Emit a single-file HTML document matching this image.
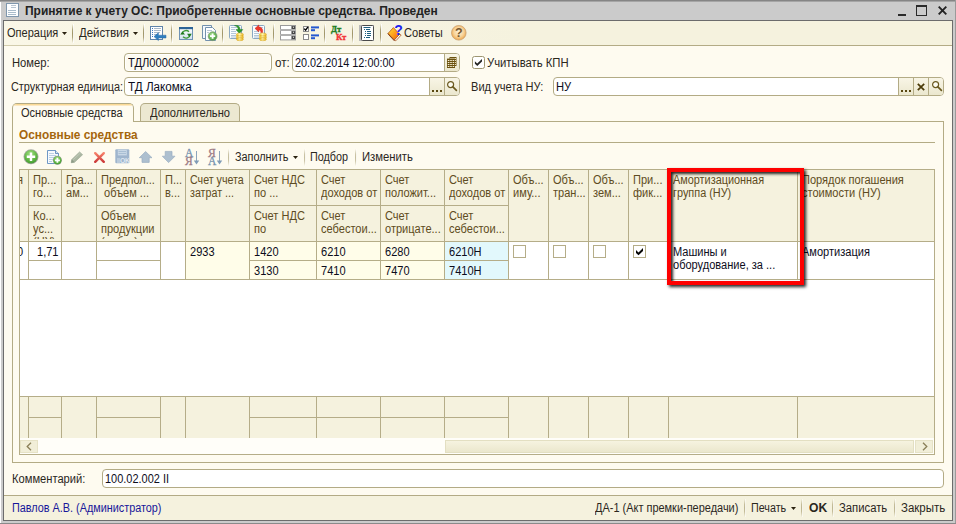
<!DOCTYPE html>
<html lang="ru"><head><meta charset="utf-8"><title>Принятие к учету ОС</title>
<style>
*{box-sizing:border-box;margin:0;padding:0}
html,body{width:956px;height:524px;overflow:hidden;background:#c9c9c9}
body{position:relative;font-family:"Liberation Sans",Arial,sans-serif;font-size:11px;line-height:13px;color:#2b271d}
.a{position:absolute}
.t{position:absolute;white-space:nowrap;line-height:13px;font-size:12px;transform-origin:0 0}
.k{transform:scaleX(0.92)}
.d{color:#0d0d1c}
.h{color:#5e4c22}
.sep{position:absolute;width:2px;background:linear-gradient(to right,transparent 0,transparent 50%,rgba(255,255,255,.9) 50%),linear-gradient(rgba(168,158,114,0),rgba(168,158,114,.95) 30%,rgba(160,150,104,1) 50%,rgba(168,158,114,.95) 70%,rgba(168,158,114,0))}
.inp{position:absolute;border:1px solid #b3ab85;border-radius:4px;background:#fff}
.btn{position:absolute;background:linear-gradient(#f8f5e6,#ebe7ce);border-left:1px solid #b3ab85}
.vl{position:absolute;width:1px;background:#b5ad88}
.hl{position:absolute;height:1px;background:#b5ad88}
.cb{position:absolute;width:13px;height:13px;border:1px solid #b5ad88;background:#fff}
svg{position:absolute;overflow:visible}
</style></head>
<body>
<div class="a" style="left:0;top:0;width:956px;height:524px;background:#cbcbcb"></div>
<div class="a" style="left:0;top:0;width:956px;height:1px;background:#858585"></div>
<div class="a" style="left:0;top:1px;width:956px;height:1px;background:#a5a5a5"></div>
<div class="a" style="left:0;top:2px;width:1px;height:522px;background:#fff"></div>
<div class="a" style="left:955px;top:0;width:1px;height:524px;background:#9a9a9a"></div>
<div class="a" style="left:0;top:523px;width:956px;height:1px;background:#8a8a8a"></div>
<div class="a" style="left:3px;top:20px;width:950px;height:501px;background:#fefbf0;border:1px solid #6c6c6c"></div>
<svg style="left:6px;top:3px" width="13" height="14" viewBox="0 0 13 14">
<rect x="0.5" y="0.5" width="12" height="13" fill="#fdfeff" stroke="#7f97ad"/>
<rect x="1" y="1" width="11" height="12" fill="none" stroke="#dfe8f0" stroke-width="0"/>
<line x1="5" y1="2.5" x2="10" y2="2.5" stroke="#b9c6d2"/>
<line x1="5" y1="4.5" x2="10" y2="4.5" stroke="#b9c6d2"/>
<line x1="2" y1="7.5" x2="10" y2="7.5" stroke="#a9bccb"/>
<line x1="2" y1="9.5" x2="10" y2="9.5" stroke="#a9bccb"/>
<line x1="2" y1="11.5" x2="10" y2="11.5" stroke="#a9bccb"/>
</svg>
<div class="t" style="left:25.0px;top:5px;transform:scaleX(0.996);font-weight:bold;color:#222;">Принятие к учету ОС: Приобретенные основные средства. Проведен</div>
<div class="a" style="left:898px;top:14px;width:8px;height:2px;background:#2a2a2a"></div>
<div class="a" style="left:916px;top:5px;width:11px;height:11px;border:1px solid #2a2a2a;border-top-width:2px"></div>
<svg style="left:938px;top:6px" width="9" height="9" viewBox="0 0 9 9"><path d="M0.7 0.7 L8.3 8.3 M8.3 0.7 L0.7 8.3" stroke="#222" stroke-width="1.9" fill="none"/></svg>
<div class="a" style="left:4px;top:21px;width:948px;height:24px;background:linear-gradient(to right,#faf7e7 0,#f5f2de 55%,#f5f2de 100%)"></div>
<div class="a" style="left:4px;top:45px;width:948px;height:1px;background:linear-gradient(to right,#d3cdae 0,#b3ab85 45%)"></div>
<div class="t" style="left:7.1px;top:27px;transform:scaleX(0.917);">Операция</div>
<svg style="left:62px;top:32px" width="5" height="3" viewBox="0 0 5 3"><path d="M0 0h5L2.5 3z" fill="#2a2210"/></svg>
<div class="sep" style="left:72px;top:24px;height:19px"></div>
<div class="t" style="left:79.0px;top:27px;transform:scaleX(0.948);">Действия</div>
<svg style="left:133px;top:32px" width="5" height="3" viewBox="0 0 5 3"><path d="M0 0h5L2.5 3z" fill="#2a2210"/></svg>
<div class="sep" style="left:143px;top:24px;height:19px"></div>
<div class="sep" style="left:171px;top:24px;height:19px"></div>
<div class="sep" style="left:222px;top:24px;height:19px"></div>
<div class="sep" style="left:273px;top:24px;height:19px"></div>
<div class="sep" style="left:324px;top:24px;height:19px"></div>
<div class="sep" style="left:352px;top:24px;height:19px"></div>
<div class="sep" style="left:380px;top:24px;height:19px"></div>
<div class="t" style="left:404.1px;top:27px;transform:scaleX(0.925);">Советы</div>
<!-- icon1: list with blue arrow -->
<svg style="left:150px;top:26px" width="17" height="16" viewBox="0 0 17 16">
<rect x="0.5" y="0.5" width="12" height="13" fill="#fdfeff" stroke="#5f84aa"/>
<path d="M2 2.5h1M2 4.5h1M2 6.5h1M2 8.5h1M2 10.5h1" stroke="#3a78c0"/>
<path d="M4 2.5h7M4 4.5h7M4 6.5h6M4 8.5h3" stroke="#a9b8c6"/>
<path d="M4 10.6 L8.4 6.8 V9.2 H16 V12 H8.4 V14.6 Z" fill="#2f7fc0" stroke="#2a6aa6" stroke-width="0.5"/>
</svg>
<!-- icon2: refresh window -->
<svg style="left:179px;top:27px" width="14" height="13" viewBox="0 0 14 13">
<defs><linearGradient id="g2" x1="0" y1="0" x2="0" y2="1"><stop offset="0" stop-color="#fff"/><stop offset="1" stop-color="#cfe0ee"/></linearGradient></defs>
<rect x="0.5" y="0.5" width="13" height="12" fill="url(#g2)" stroke="#6f93b6"/>
<rect x="0" y="0" width="14" height="2.2" fill="#2d6497"/>
<path d="M3 7.2 A4 3.6 0 0 1 10 4.8" stroke="#3f9a3a" stroke-width="1.3" fill="none"/>
<path d="M11 7.4 A4 3.6 0 0 1 4 9.8" stroke="#3f9a3a" stroke-width="1.3" fill="none"/>
<path d="M1.2 7.6 L6 7.6 L3.6 4.4 Z" fill="#1f7a1f"/>
<path d="M8 6.8 L12.8 6.8 L10.4 10 Z" fill="#1f7a1f"/>
</svg>
<!-- icon3: docs with plus -->
<svg style="left:202px;top:25px" width="16" height="16" viewBox="0 0 16 16">
<defs><radialGradient id="g3" cx="0.4" cy="0.35" r="0.7"><stop offset="0" stop-color="#a6e08a"/><stop offset="1" stop-color="#3f9a35"/></radialGradient></defs>
<path d="M0.5 0.5 H9.5 V13.5 H0.5 Z" fill="#f4f8fb" stroke="#7391ae"/>
<path d="M3.5 2.5 H10.5 L13.5 5.5 V15.5 H3.5 Z" fill="#fdfeff" stroke="#7391ae"/>
<path d="M5 5.5h5M5 7.5h2" stroke="#b9c7d4"/>
<circle cx="10.6" cy="11.2" r="4.4" fill="url(#g3)" stroke="#7f9a7a" stroke-width="0.8"/>
<path d="M10.6 8.6 V13.8 M8 11.2 H13.2" stroke="#fff" stroke-width="1.8"/>
</svg>
<!-- icon4: doc + green arrow + coins -->
<svg style="left:229px;top:25px" width="16" height="16" viewBox="0 0 16 16">
<defs><linearGradient id="gc" x1="0" y1="0" x2="1" y2="0"><stop offset="0" stop-color="#f2bc1c"/><stop offset="0.45" stop-color="#fff7b0"/><stop offset="1" stop-color="#eeb418"/></linearGradient></defs>
<rect x="0.5" y="0.5" width="12" height="13" rx="1" fill="#fafcfe" stroke="#7d9dbc" stroke-width="0.9"/>
<path d="M2 2.5h6M2 4.5h4M2 6.5h5M2 8.5h5M2 10.5h5M2 12h5" stroke="#b3c6d8"/>
<path d="M5.5 0.6 C9.5 -0.2 11.2 2 11 4.6 H13.8 L10.4 8.4 L7 4.6 H9.2 C9.2 2.6 8 1.2 5.5 0.6 Z" fill="#2f9a2a" stroke="#1f7a1f" stroke-width="0.5"/>
<g stroke="#cf9a12" stroke-width="0.45" fill="url(#gc)">
<ellipse cx="10.9" cy="14.2" rx="3.5" ry="1.5"/><ellipse cx="10.9" cy="12.6" rx="3.5" ry="1.5"/><ellipse cx="10.9" cy="11" rx="3.5" ry="1.5"/><ellipse cx="10.9" cy="9.4" rx="3.5" ry="1.5"/>
</g>
</svg>
<!-- icon5: doc + red arrow + coins -->
<svg style="left:252px;top:25px" width="16" height="16" viewBox="0 0 16 16">
<rect x="0.5" y="0.5" width="12" height="13" rx="1" fill="#fafcfe" stroke="#7d9dbc" stroke-width="0.9"/>
<path d="M2 6.5h5M2 8.5h5M2 10.5h5M2 12h5M9 2.5h2" stroke="#b3c6d8"/>
<path d="M3 3.4 L6.8 0 V2 C9.6 2 11.2 4 10.6 7.6 H8.8 C9 5.8 8.4 4.9 6.8 4.9 V6.9 Z" fill="#f0382a" stroke="#c8221a" stroke-width="0.5"/>
<g stroke="#cf9a12" stroke-width="0.45" fill="url(#gc)">
<ellipse cx="10.9" cy="14.2" rx="3.5" ry="1.5"/><ellipse cx="10.9" cy="12.6" rx="3.5" ry="1.5"/><ellipse cx="10.9" cy="11" rx="3.5" ry="1.5"/><ellipse cx="10.9" cy="9.4" rx="3.5" ry="1.5"/>
</g>
</svg>
<!-- icon6: three dropdown rows -->
<svg style="left:280px;top:25px" width="16" height="16" viewBox="0 0 16 16">
<g>
<rect x="0" y="0" width="16" height="5" fill="#9a9a9a"/><rect x="1" y="1" width="10" height="3" fill="#fff"/><rect x="12" y="1" width="3" height="3" fill="#454545"/>
<rect x="0" y="5" width="16" height="5" fill="#9a9a9a"/><rect x="1" y="6" width="10" height="3" fill="#fff"/><rect x="12" y="6" width="3" height="3" fill="#454545"/>
<rect x="0" y="10" width="16" height="5.4" fill="#9a9a9a"/><rect x="1" y="11" width="10" height="3.4" fill="#fff"/><rect x="12" y="11" width="3" height="3" fill="#454545"/>
<path d="M0 5h16M0 10h16" stroke="#d0d0d0" stroke-width="0.8"/><path d="M12.6 1.8h1.8l-0.9 1.2zM12.6 6.8h1.8l-0.9 1.2zM12.6 11.8h1.8l-0.9 1.2z" fill="#fff"/>
</g>
</svg>
<!-- icon7: checkboxes with blue lines -->
<svg style="left:303px;top:26px" width="16" height="14" viewBox="0 0 16 14">
<rect x="0.5" y="0.5" width="5" height="5" fill="#fff" stroke="#8a8a8a"/>
<path d="M1.2 2.6 L2.6 4.2 L5 0.8" stroke="#000" stroke-width="1.4" fill="none"/>
<rect x="0.5" y="8.5" width="5" height="5" fill="#fff" stroke="#8a8a8a"/>
<rect x="8" y="0.4" width="8" height="2" fill="#2458d0"/><rect x="8" y="3.2" width="4" height="2" fill="#2458d0"/>
<rect x="8" y="8.4" width="8" height="2" fill="#2458d0"/><rect x="8" y="11.2" width="4" height="2" fill="#2458d0"/>
</svg>
<!-- icon8: ДтКт -->
<div class="a" style="left:331px;top:24px;font-family:'Liberation Serif',serif;font-weight:bold;font-size:8.7px;line-height:10px;color:#1c7c1c;white-space:nowrap;letter-spacing:0;-webkit-text-stroke:0.35px #1c7c1c">Дт</div>
<div class="a" style="left:336px;top:32px;font-family:'Liberation Serif',serif;font-weight:bold;font-size:8.7px;line-height:10px;color:#f23434;white-space:nowrap;letter-spacing:0;-webkit-text-stroke:0.35px #f23434">Кт</div>
<!-- icon9: framed document -->
<svg style="left:359px;top:25px" width="15" height="16" viewBox="0 0 15 16">
<rect x="0" y="0" width="15" height="16" fill="#b9b9b9"/>
<rect x="2.5" y="0.5" width="12" height="15" rx="1" fill="#fff" stroke="#4a4a4a"/>
<path d="M4.5 2.5h7" stroke="#1d5f80"/>
<path d="M5 4.5h1M7 4.5h4M6 6.5h1M8 6.5h4M6 8.5h1M8 8.5h4M6 10.5h1M8 10.5h4M5 12.5h1M7 12.5h4" stroke="#1d5f80"/>
</svg>
<!-- icon10: book with ? -->
<svg style="left:387px;top:24px" width="17" height="18" viewBox="0 0 17 18">
<defs><linearGradient id="gb" x1="0" y1="0" x2="1" y2="1"><stop offset="0" stop-color="#ffe23a"/><stop offset="0.55" stop-color="#ff9a1a"/><stop offset="1" stop-color="#e2520a"/></linearGradient></defs>
<path d="M1 9.4 L6.4 3.6 L12.6 10.2 L7.4 16 Z" fill="url(#gb)" stroke="#a8480a" stroke-width="0.7"/>
<path d="M7.4 16 L8.8 16.8 L14.2 11 L12.6 10.2 Z" fill="#fff" stroke="#a8480a" stroke-width="0.7"/>
<path d="M1 9.4 L2 11 L7.6 17" stroke="#7a2a04" stroke-width="0.9" fill="none"/>
<text x="7.2" y="11" font-family="Liberation Sans, Arial, sans-serif" font-weight="bold" font-size="14" fill="#1a22f0">?</text>
</svg>
<!-- help -->
<svg style="left:451px;top:25px" width="16" height="16" viewBox="0 0 16 16">
<defs><radialGradient id="gh" cx="0.5" cy="0.45" r="0.55"><stop offset="0" stop-color="#fdf0d6"/><stop offset="0.6" stop-color="#f8d49a"/><stop offset="1" stop-color="#eea64a"/></radialGradient></defs>
<circle cx="7.8" cy="7.8" r="7.3" fill="url(#gh)" stroke="#c9a070" stroke-width="0.8"/>
<text x="7.9" y="12.4" text-anchor="middle" font-family="Liberation Sans, Arial, sans-serif" font-weight="bold" font-size="12.5" fill="#75572e">?</text>
</svg>

<div class="t" style="left:11.6px;top:57px;transform:scaleX(0.934);">Номер:</div>
<div class="inp" style="left:124px;top:53px;width:148px;height:19px;background:#fdfbf0;box-shadow:inset 0 0 0 1px #fff"></div>
<div class="t" style="left:128.0px;top:57px;transform:scaleX(0.93);color:#0d0d1c;">ТДЛ00000002</div>
<div class="t" style="left:275.0px;top:57px;transform:scaleX(0.964);">от:</div>
<div class="inp" style="left:292px;top:53px;width:168px;height:19px;overflow:hidden"><div class="btn" style="left:151px;top:0;width:16px;height:17px"></div></div>
<div class="t" style="left:294.6px;top:57px;transform:scaleX(0.904);color:#0d0d1c;">20.02.2014 12:00:00</div>
<svg style="left:447px;top:56px" width="10" height="12" viewBox="0 0 10 12"><rect x="2.5" y="1" width="7" height="9" fill="#6b5210"/><path d="M3 2.5h6M3 4.5h6M3 6.5h6M3 8.5h6" stroke="#f1e9c8" stroke-width="0.9"/><rect x="0" y="2.6" width="8" height="9.4" fill="#6b5210"/><path d="M0.8 4.5h1.6M3.2 4.5h1.6M5.6 4.5h1.6M0.8 6.5h1.6M3.2 6.5h1.6M5.6 6.5h1.6M0.8 8.5h1.6M3.2 8.5h1.6M5.6 8.5h1.6M0.8 10.5h1.6M3.2 10.5h1.6M5.6 10.5h1.6" stroke="#f6f0d6" stroke-width="1"/></svg>
<div class="a" style="left:472px;top:56px;width:13px;height:13px;border:1px solid #9e9672;border-radius:2.5px;background:#fff"></div>
<svg style="left:472px;top:56px" width="13" height="13" viewBox="0 0 13 13"><path d="M2.9 5.3 L5.2 7.5 L10 3 L10 5.6 L5.3 10.1 L2.9 7.8 Z" fill="#262626"/></svg>
<div class="t" style="left:486.5px;top:57px;transform:scaleX(0.941);">Учитывать КПН</div>
<div class="t" style="left:11.1px;top:81px;transform:scaleX(0.906);">Структурная единица:</div>
<div class="inp" style="left:124px;top:77px;width:336px;height:19px;overflow:hidden"><div class="btn" style="left:304px;top:0;width:15px;height:17px"></div><div class="btn" style="left:319px;top:0;width:16px;height:17px"></div></div>
<div class="t" style="left:128.0px;top:81px;transform:scaleX(0.974);color:#0d0d1c;">ТД Лакомка</div>
<div class="a" style="left:432px;top:90px;width:2px;height:2px;background:#5a4810;box-shadow:4px 0 0 #5a4810,8px 0 0 #5a4810"></div>
<svg style="left:447px;top:81px" width="11" height="11" viewBox="0 0 11 11"><circle cx="3.6" cy="3.6" r="3" fill="#fdfcf2" stroke="#6b5a20" stroke-width="1.2"/><path d="M5.9 5.9 L9.4 9.4" stroke="#6b5a20" stroke-width="1.7" stroke-linecap="round"/></svg>
<div class="t" style="left:471.4px;top:81px;transform:scaleX(0.924);">Вид учета НУ:</div>
<div class="inp" style="left:553px;top:77px;width:391px;height:19px;overflow:hidden"><div class="btn" style="left:344px;top:0;width:15px;height:17px"></div><div class="btn" style="left:359px;top:0;width:15px;height:17px"></div><div class="btn" style="left:374px;top:0;width:16px;height:17px"></div></div>
<div class="t" style="left:555.8px;top:81px;transform:scaleX(0.933);color:#0d0d1c;">НУ</div>
<div class="a" style="left:901px;top:90px;width:2px;height:2px;background:#5a4810;box-shadow:4px 0 0 #5a4810,8px 0 0 #5a4810"></div>
<svg style="left:932px;top:81px" width="11" height="11" viewBox="0 0 11 11"><circle cx="3.6" cy="3.6" r="3" fill="#fdfcf2" stroke="#6b5a20" stroke-width="1.2"/><path d="M5.9 5.9 L9.4 9.4" stroke="#6b5a20" stroke-width="1.7" stroke-linecap="round"/></svg>
<svg style="left:917px;top:83px" width="8" height="8" viewBox="0 0 8 8"><path d="M0.8 0.8 L7.2 7.2 M7.2 0.8 L0.8 7.2" stroke="#4a3a08" stroke-width="1.7" fill="none"/></svg>
<div class="a" style="left:12px;top:121px;width:932px;height:342px;border:1px solid #b3ab85;background:#fefbf0"></div>
<div class="a" style="left:140px;top:103px;width:100px;height:19px;border:1px solid #b3ab85;border-bottom:none;border-radius:5px 5px 0 0;background:#ece8d1"></div>
<div class="a" style="left:140px;top:121px;width:100px;height:1px;background:#b3ab85"></div>
<div class="t" style="left:150.0px;top:107px;transform:scaleX(0.926);">Дополнительно</div>
<div class="a" style="left:12px;top:103px;width:122px;height:19px;border:1px solid #b3ab85;border-bottom:none;border-radius:5px 5px 0 0;background:#fefbf0;overflow:hidden"><div class="a" style="left:0;top:0;width:120px;height:1px;background:#fad995"></div><div class="a" style="left:0;top:1px;width:120px;height:1px;background:#fce9c2"></div></div>
<div class="a" style="left:13px;top:121px;width:120px;height:2px;background:#fefbf0"></div>
<div class="t" style="left:20.7px;top:107px;transform:scaleX(0.918);">Основные средства</div>
<div class="t" style="left:19.0px;top:129px;transform:scaleX(0.988);font-weight:bold;color:#a5660c;">Основные средства</div>
<div class="hl" style="left:19px;top:142px;width:916px;background:#b3ab85"></div>
<!-- add: green plus -->
<svg style="left:23px;top:149px" width="16" height="16" viewBox="0 0 16 16">
<defs><radialGradient id="ga" cx="0.45" cy="0.3" r="0.75"><stop offset="0" stop-color="#a4e084"/><stop offset="0.6" stop-color="#62b845"/><stop offset="1" stop-color="#3f962e"/></radialGradient></defs>
<circle cx="8" cy="7.8" r="7.5" fill="#a9aaa4"/>
<circle cx="8" cy="7.8" r="6.7" fill="url(#ga)"/>
<path d="M8 3.6 V12 M3.8 7.8 H12.2" stroke="#fff" stroke-width="2.4"/>
</svg>
<!-- copy: doc with plus -->
<svg style="left:47px;top:150px" width="16" height="15" viewBox="0 0 16 15">
<path d="M0.5 0.5 H8.5 L11.5 3.5 V13.5 H0.5 Z" fill="#f7fafd" stroke="#5f8cc0" stroke-width="0.9"/>
<path d="M8.5 0.5 V3.5 H11.5" fill="#dbe6f2" stroke="#4f7db4" stroke-width="0.8"/>
<path d="M2 3.5h5M2 5.5h7M2 7.5h5M2 9.5h4M2 11.5h3" stroke="#bccfe4"/>
<circle cx="10.4" cy="10.3" r="4.5" fill="#8f9f8a"/>
<circle cx="10.4" cy="10.3" r="3.9" fill="url(#ga)"/>
<path d="M10.4 7.8 V12.8 M7.9 10.3 H12.9" stroke="#fff" stroke-width="1.8"/>
</svg>
<!-- pencil -->
<svg style="left:70px;top:151px" width="14" height="13" viewBox="0 0 14 13">
<path d="M1.2 11.8 L1.8 8.4 L9.6 0.9 L12.6 3.7 L4.6 11.2 Z" fill="#aab6a2" stroke="#9aa894" stroke-width="0.6"/>
<path d="M1.2 11.8 L1.8 8.4 L4.6 11.2 Z" fill="#8c9a86"/>
<path d="M3.4 8.6 L10.6 1.9" stroke="#c2ccbb" stroke-width="0.9"/>
</svg>
<!-- delete: red X -->
<svg style="left:93px;top:151px" width="13" height="13" viewBox="0 0 13 13">
<defs><linearGradient id="gx" x1="0" y1="0" x2="0" y2="1"><stop offset="0" stop-color="#f6806a"/><stop offset="1" stop-color="#cc3a3a"/></linearGradient></defs>
<path d="M2.2 2.2 L10.8 10.8 M10.8 2.2 L2.2 10.8" stroke="url(#gx)" stroke-width="2.4" stroke-linecap="round" fill="none"/>
</svg>
<!-- save OK -->
<svg style="left:115px;top:149px" width="15" height="15" viewBox="0 0 15 15">
<rect x="0.3" y="0.3" width="14" height="14" rx="1" fill="#9fb5cd"/>
<rect x="2.8" y="0.8" width="9" height="5.6" fill="#c9d8e6"/>
<path d="M3.5 2.5h7.5M3.5 4.5h7.5" stroke="#a9bfd4"/>
<rect x="2" y="9" width="3" height="5" fill="#b9cadb"/>
<text x="5" y="14" font-family="Liberation Sans, Arial, sans-serif" font-weight="bold" font-size="6.8" fill="#dfe8f1" letter-spacing="-0.2">OK</text>
</svg>
<!-- up arrow -->
<svg style="left:139px;top:151px" width="14" height="12" viewBox="0 0 14 12">
<path d="M6.6 0.5 L13 6.7 H10.2 V11.4 H3 V6.7 H0.3 Z" fill="#adbfcf" stroke="#9aaec1" stroke-width="0.7"/>
</svg>
<!-- down arrow -->
<svg style="left:162px;top:151px" width="14" height="12" viewBox="0 0 14 12">
<path d="M6.6 11.6 L13 5.2 H10 V0.4 H3.2 V5.2 H0.3 Z" fill="#adbfcf" stroke="#9aaec1" stroke-width="0.7"/>
</svg>
<!-- sort asc -->
<div class="a" style="left:185px;top:148px;font-family:'Liberation Serif',serif;font-weight:normal;font-size:11.5px;line-height:11px;color:#7391ae;-webkit-text-stroke:0.3px #7391ae;white-space:nowrap">А</div>
<div class="a" style="left:185px;top:156px;font-family:'Liberation Serif',serif;font-weight:normal;font-size:11.5px;line-height:11px;color:#9c7a84;-webkit-text-stroke:0.3px #9c7a84;white-space:nowrap">Я</div>
<svg style="left:193px;top:151px" width="7" height="14" viewBox="0 0 7 14"><path d="M3.5 0 V11" stroke="#7f9bb6" stroke-width="0.9"/><path d="M0.8 9.6 H6.2 L3.5 13.4 Z" fill="#7f9bb6"/></svg>
<!-- sort desc -->
<div class="a" style="left:208px;top:148px;font-family:'Liberation Serif',serif;font-weight:normal;font-size:11.5px;line-height:11px;color:#9c7a84;-webkit-text-stroke:0.3px #9c7a84;white-space:nowrap">Я</div>
<div class="a" style="left:208px;top:156px;font-family:'Liberation Serif',serif;font-weight:normal;font-size:11.5px;line-height:11px;color:#7391ae;-webkit-text-stroke:0.3px #7391ae;white-space:nowrap">А</div>
<svg style="left:216px;top:151px" width="7" height="14" viewBox="0 0 7 14"><path d="M3.5 0 V11" stroke="#7f9bb6" stroke-width="0.9"/><path d="M0.8 9.6 H6.2 L3.5 13.4 Z" fill="#7f9bb6"/></svg>

<div class="sep" style="left:228px;top:149px;height:17px;opacity:0.6"></div>
<div class="sep" style="left:304px;top:149px;height:17px;opacity:0.6"></div>
<div class="sep" style="left:355px;top:149px;height:17px;opacity:0.6"></div>
<div class="t" style="left:234.6px;top:151px;transform:scaleX(0.905);">Заполнить</div>
<svg style="left:293px;top:156px" width="5" height="3" viewBox="0 0 5 3"><path d="M0 0h5L2.5 3z" fill="#2a2210"/></svg>
<div class="t" style="left:310.4px;top:151px;transform:scaleX(0.9);">Подбор</div>
<div class="t" style="left:362.1px;top:151px;transform:scaleX(0.94);">Изменить</div>
<div class="a" style="left:19px;top:169px;width:916px;height:286px;background:#fff;border:1px solid #b5ad88"></div>
<div class="a" style="left:20px;top:170px;width:914px;height:71px;background:#f5f2de"></div>
<div class="a" style="left:20px;top:397px;width:914px;height:41px;background:#f5f2de"></div>
<div class="a" style="left:20px;top:438px;width:914px;height:16px;background:#fffef9"></div>
<div class="a" style="left:20px;top:440px;width:18px;height:13px;background:#f1eed8;border:1px solid #e6e2c6"></div>
<svg style="left:26px;top:442px" width="6" height="9" viewBox="0 0 6 9"><path d="M5 0.7 L1.2 4.5 L5 8.3" stroke="#8a7f58" stroke-width="1.3" fill="none"/></svg>
<div class="a" style="left:915px;top:440px;width:18px;height:13px;background:#f1eed8;border:1px solid #e6e2c6"></div>
<svg style="left:922px;top:442px" width="6" height="9" viewBox="0 0 6 9"><path d="M1 0.7 L4.8 4.5 L1 8.3" stroke="#8a7f58" stroke-width="1.3" fill="none"/></svg>
<div class="a" style="left:445px;top:440px;width:469px;height:13px;background:linear-gradient(#f6f3e0,#ebe7cd);border:1px solid #e3dfc2"></div>
<div class="a" style="left:186px;top:242px;width:258px;height:37px;background:#fffde9"></div>
<div class="a" style="left:445px;top:242px;width:63px;height:37px;background:#e2f8fc"></div>
<div class="vl" style="left:28px;top:169px;height:110px"></div>
<div class="vl" style="left:28px;top:396px;height:42px"></div>
<div class="vl" style="left:61px;top:169px;height:110px"></div>
<div class="vl" style="left:61px;top:396px;height:42px"></div>
<div class="vl" style="left:96px;top:169px;height:110px"></div>
<div class="vl" style="left:96px;top:396px;height:42px"></div>
<div class="vl" style="left:160px;top:169px;height:110px"></div>
<div class="vl" style="left:160px;top:396px;height:42px"></div>
<div class="vl" style="left:185px;top:169px;height:110px"></div>
<div class="vl" style="left:185px;top:396px;height:42px"></div>
<div class="vl" style="left:249px;top:169px;height:110px"></div>
<div class="vl" style="left:249px;top:396px;height:42px"></div>
<div class="vl" style="left:316px;top:169px;height:110px"></div>
<div class="vl" style="left:316px;top:396px;height:42px"></div>
<div class="vl" style="left:380px;top:169px;height:110px"></div>
<div class="vl" style="left:380px;top:396px;height:42px"></div>
<div class="vl" style="left:444px;top:169px;height:110px"></div>
<div class="vl" style="left:444px;top:396px;height:42px"></div>
<div class="vl" style="left:508px;top:169px;height:110px"></div>
<div class="vl" style="left:508px;top:396px;height:42px"></div>
<div class="vl" style="left:548px;top:169px;height:110px"></div>
<div class="vl" style="left:548px;top:396px;height:42px"></div>
<div class="vl" style="left:588px;top:169px;height:110px"></div>
<div class="vl" style="left:588px;top:396px;height:42px"></div>
<div class="vl" style="left:628px;top:169px;height:110px"></div>
<div class="vl" style="left:628px;top:396px;height:42px"></div>
<div class="vl" style="left:668px;top:169px;height:110px"></div>
<div class="vl" style="left:668px;top:396px;height:42px"></div>
<div class="vl" style="left:797px;top:169px;height:110px"></div>
<div class="vl" style="left:797px;top:396px;height:42px"></div>
<div class="hl" style="left:19px;top:241px;width:916px"></div>
<div class="hl" style="left:19px;top:279px;width:916px"></div>
<div class="hl" style="left:19px;top:396px;width:916px"></div>
<div class="hl" style="left:28px;top:205px;width:33px"></div>
<div class="hl" style="left:28px;top:260px;width:33px"></div>
<div class="hl" style="left:28px;top:417px;width:33px"></div>
<div class="hl" style="left:96px;top:205px;width:64px"></div>
<div class="hl" style="left:96px;top:260px;width:64px"></div>
<div class="hl" style="left:96px;top:417px;width:64px"></div>
<div class="hl" style="left:249px;top:205px;width:259px"></div>
<div class="hl" style="left:249px;top:260px;width:259px"></div>
<div class="hl" style="left:249px;top:417px;width:259px"></div>
<div class="t h" style="left:23.7px;top:174px;width:5.4px;height:13px;overflow:hidden;transform:scaleX(0.92)">&nbsp;</div>
<div class="a" style="left:20px;top:174px;width:8px;height:26px;overflow:hidden"><div class="t h k" style="left:-3px;top:0">я</div></div>
<div class="t h" style="left:32.7px;top:174px;width:31.5px;height:26px;overflow:hidden;transform:scaleX(0.92)">Пр...<br>го...</div>
<div class="t h" style="left:32.7px;top:210px;width:31.5px;height:29px;overflow:hidden;transform:scaleX(0.92)">Ко...<br>ус...<br>(НУ)</div>
<div class="t h" style="left:65.7px;top:174px;width:33.7px;height:26px;overflow:hidden;transform:scaleX(0.92)">Гра...<br>ам...</div>
<div class="t h" style="left:100.7px;top:174px;width:65.2px;height:26px;overflow:hidden;transform:scaleX(0.92)">Предпол...<br>&nbsp;объем ...</div>
<div class="t h" style="left:100.7px;top:210px;width:65.2px;height:29px;overflow:hidden;transform:scaleX(0.92)">Объем<br>продукции<br>(работ) в</div>
<div class="t h" style="left:164.7px;top:174px;width:22.8px;height:26px;overflow:hidden;transform:scaleX(0.92)">П...<br>в...</div>
<div class="t h" style="left:189.7px;top:174px;width:67.4px;height:26px;overflow:hidden;transform:scaleX(0.89)">Счет учета<br>затрат ...</div>
<div class="t h" style="left:253.7px;top:174px;width:68.5px;height:26px;overflow:hidden;transform:scaleX(0.92)">Счет НДС<br>по ...</div>
<div class="t h" style="left:253.7px;top:210px;width:68.5px;height:26px;overflow:hidden;transform:scaleX(0.92)">Счет НДС<br>по</div>
<div class="t h" style="left:320.7px;top:174px;width:65.2px;height:26px;overflow:hidden;transform:scaleX(0.92)">Счет<br>доходов от</div>
<div class="t h" style="left:320.7px;top:210px;width:65.2px;height:26px;overflow:hidden;transform:scaleX(0.92)">Счет<br>себестои...</div>
<div class="t h" style="left:384.7px;top:174px;width:65.2px;height:26px;overflow:hidden;transform:scaleX(0.92)">Счет<br>положит...</div>
<div class="t h" style="left:384.7px;top:210px;width:65.2px;height:26px;overflow:hidden;transform:scaleX(0.92)">Счет<br>отрицате...</div>
<div class="t h" style="left:448.7px;top:174px;width:65.2px;height:26px;overflow:hidden;transform:scaleX(0.92)">Счет<br>доходов от</div>
<div class="t h" style="left:448.7px;top:210px;width:65.2px;height:26px;overflow:hidden;transform:scaleX(0.92)">Счет<br>себестои...</div>
<div class="t h" style="left:512.7px;top:174px;width:39.1px;height:26px;overflow:hidden;transform:scaleX(0.92)">Объ...<br>иму...</div>
<div class="t h" style="left:552.7px;top:174px;width:39.1px;height:26px;overflow:hidden;transform:scaleX(0.92)">Объ...<br>тран...</div>
<div class="t h" style="left:592.7px;top:174px;width:39.1px;height:26px;overflow:hidden;transform:scaleX(0.92)">Объ...<br>зем...</div>
<div class="t h" style="left:632.7px;top:174px;width:39.1px;height:26px;overflow:hidden;transform:scaleX(0.92)">При...<br>фик...</div>
<div class="t h" style="left:672.7px;top:174px;width:137.8px;height:26px;overflow:hidden;transform:scaleX(0.907)">Амортизационная<br>группа (НУ)</div>
<div class="t h" style="left:801.7px;top:174px;width:144.6px;height:26px;overflow:hidden;transform:scaleX(0.92)">Порядок погашения<br>стоимости (НУ)</div>
<div class="a" style="left:20px;top:246px;width:8px;height:13px;overflow:hidden"><div class="t k d" style="left:-3px;top:0">0</div></div>
<div class="t k d" style="left:37px;top:246px">1,71</div>
<div class="t k d" style="left:189.6px;top:246px">2933</div>
<div class="t k d" style="left:253.6px;top:246px">1420</div>
<div class="t k d" style="left:253.6px;top:265px">3130</div>
<div class="t k d" style="left:320.6px;top:246px">6210</div>
<div class="t k d" style="left:320.6px;top:265px">7410</div>
<div class="t k d" style="left:384.6px;top:246px">6280</div>
<div class="t k d" style="left:384.6px;top:265px">7470</div>
<div class="t k d" style="left:448.6px;top:246px">6210Н</div>
<div class="t k d" style="left:448.6px;top:265px">7410Н</div>
<div class="cb" style="left:513px;top:245px"></div>
<div class="cb" style="left:553px;top:245px"></div>
<div class="cb" style="left:593px;top:245px"></div>
<div class="cb" style="left:633px;top:245px"></div>
<svg style="left:633px;top:245px" width="13" height="13" viewBox="0 0 13 13"><path d="M3 5 L5.5 7.4 L10 3 L10 6 L5.5 10.2 L3 8 Z" fill="#050505"/></svg>
<div class="t k d" style="left:673px;top:246px">Машины и<br>оборудование, за ...</div>
<div class="t k d" style="left:802px;top:246px">Амортизация</div>
<div class="a" style="left:667px;top:168px;width:137px;height:117px;border:4px solid #fe0000;box-shadow:2px 2px 3px rgba(0,0,0,.85), inset 2px 2px 3px rgba(0,0,0,.85)"></div>
<div class="t" style="left:11.9px;top:473px;transform:scaleX(0.93);">Комментарий:</div>
<div class="inp" style="left:102px;top:469px;width:842px;height:19px"></div>
<div class="t" style="left:104.5px;top:473px;transform:scaleX(0.913);color:#0d0d1c;">100.02.002 II</div>
<div class="a" style="left:4px;top:495px;width:948px;height:1px;background:#b3ab85"></div>
<div class="a" style="left:4px;top:496px;width:948px;height:24px;background:#f5f2de"></div>
<div class="t" style="left:12.0px;top:502px;transform:scaleX(0.903);color:#17179a;">Павлов А.В. (Администратор)</div>
<div class="t" style="left:595.0px;top:502px;transform:scaleX(0.913);">ДА-1 (Акт премки-передачи)</div>
<div class="sep" style="left:744px;top:499px;height:18px;opacity:0.65"></div>
<div class="t" style="left:750.5px;top:502px;transform:scaleX(0.895);">Печать</div>
<svg style="left:791px;top:507px" width="5" height="3" viewBox="0 0 5 3"><path d="M0 0h5L2.5 3z" fill="#2a2210"/></svg>
<div class="sep" style="left:801px;top:499px;height:18px;opacity:0.65"></div>
<div class="t" style="left:809.0px;top:502px;transform:scaleX(1.011);font-weight:bold;">OK</div>
<div class="sep" style="left:832px;top:499px;height:18px;opacity:0.65"></div>
<div class="t" style="left:839.1px;top:502px;transform:scaleX(0.94);">Записать</div>
<div class="sep" style="left:894px;top:499px;height:18px;opacity:0.65"></div>
<div class="t" style="left:901.2px;top:502px;transform:scaleX(0.958);">Закрыть</div>
</body></html>
